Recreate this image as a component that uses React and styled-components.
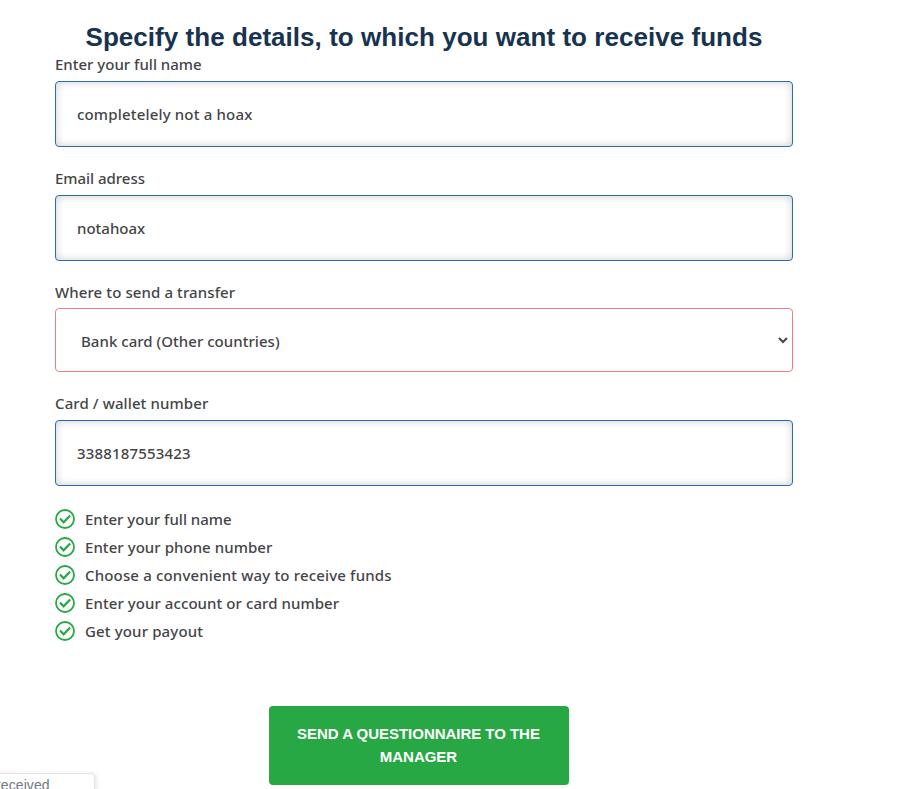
import React from 'react';
import styled, { createGlobalStyle } from 'styled-components';

const GlobalStyle = createGlobalStyle`
  *, *::before, *::after { box-sizing: border-box; }
  html, body { margin: 0; background: #fff; }
  body {
    height: 789px;
    overflow: hidden;
    font-family: "Noto Sans", sans-serif;
    font-size: 15px;
    font-weight: 500;
    line-height: 24px;
    color: #444547;
  }
`;

const Page = styled.main`
  position: relative;
  width: 902px;
  height: 789px;
  overflow: hidden;
  padding: 22px 0 0 55px;
`;

const Form = styled.form`
  width: 738px;
  display: flex;
  flex-direction: column;
`;

const Title = styled.h1`
  margin: 0;
  font: 700 26px/30px "Liberation Sans", sans-serif;
  letter-spacing: 0.04px;
  color: #17334f;
  text-align: center;
  white-space: nowrap;
`;

const Field = styled.label`
  display: flex;
  flex-direction: column;
  margin-bottom: 19px;
`;

const Caption = styled.span`
  height: ${(p) => p.$height}px;
  letter-spacing: ${(p) => p.$spacing}px;
  white-space: nowrap;
`;

const Input = styled.input`
  height: 66px;
  padding: 0 21px;
  border: 1px solid #2b6cb0;
  border-radius: 4px;
  outline: none;
  background: #fff;
  box-shadow: inset 0 0 8px rgba(0, 0, 0, 0.2);
  font: 500 15px/24px "Noto Sans", sans-serif;
  letter-spacing: ${(p) => p.$spacing}px;
  color: #444547;
`;

const SelectBox = styled.span`
  display: flex;
  align-items: center;
  height: 64px;
  padding-right: 4px;
  border: 1px solid #ec7f88;
  border-radius: 4px;
`;

const Select = styled.select`
  flex: 1;
  height: 62px;
  padding: 2px 0 0 25px;
  border: 0;
  outline: none;
  appearance: none;
  background: transparent;
  font: 500 15px/24px "Noto Sans", sans-serif;
  letter-spacing: ${(p) => p.$spacing}px;
  color: #444547;
`;

const Chevron = styled.svg`
  width: 10px;
  height: 8px;
  flex: none;
`;

const Steps = styled.ul`
  list-style: none;
  margin: 0;
  padding: 0;
`;

const Step = styled.li`
  display: flex;
  align-items: center;
  gap: 10px;
  height: 28px;
  letter-spacing: ${(p) => p.$spacing}px;
  white-space: nowrap;
`;

const CheckIcon = styled.svg`
  width: 20px;
  height: 20px;
  flex: none;
`;

const Submit = styled.button`
  align-self: center;
  width: 300px;
  height: 79px;
  margin: 61px 10px 0 0;
  padding: 0 21px 2px 20px;
  border: 0;
  border-radius: 4px;
  background: #28a745;
  color: #fff;
  font: 700 15px/23px "Liberation Sans", sans-serif;
  letter-spacing: -0.03px;
`;

const Toast = styled.aside`
  position: absolute;
  left: -10px;
  top: 773px;
  width: 105px;
  height: 40px;
  padding: 1px 0 0 5px;
  border: 1px solid #e4e5e6;
  border-radius: 4px;
  background: #fff;
  box-shadow: 1px 1px 5px rgba(0, 0, 0, 0.12);
  font: 14px/21px "Liberation Sans", sans-serif;
  letter-spacing: 0.1px;
  color: #717982;
`;

const steps = [
  ['Enter your full name', 0],
  ['Enter your phone number', 0.05],
  ['Choose a convenient way to receive funds', 0.16],
  ['Enter your account or card number', 0.07],
  ['Get your payout', 0.14],
];

export default function App() {
  return (
    <>
      <GlobalStyle />
      <Page>
        <Form>
          <Title>Specify the details, to which you want to receive funds</Title>
          <Field>
            <Caption $height={29} $spacing={0}>Enter your full name</Caption>
            <Input $spacing={0.17} defaultValue="completelely not a hoax" />
          </Field>
          <Field>
            <Caption $height={29} $spacing={-0.03}>Email adress</Caption>
            <Input $spacing={0} defaultValue="notahoax" />
          </Field>
          <Field>
            <Caption $height={28} $spacing={0.1}>Where to send a transfer</Caption>
            <SelectBox>
              <Select $spacing={0.03}>
                <option>Bank card (Other countries)</option>
              </Select>
              <Chevron viewBox="0 0 10 8" fill="none">
                <path d="M1 2l4 4 4-4" stroke="#444547" strokeWidth="2" />
              </Chevron>
            </SelectBox>
          </Field>
          <Field>
            <Caption $height={29} $spacing={0.1}>Card / wallet number</Caption>
            <Input $spacing={0.17} defaultValue="3388187553423" />
          </Field>
          <Steps>
            {steps.map(([text, spacing]) => (
              <Step key={text} $spacing={spacing}>
                <CheckIcon viewBox="0 0 20 20" fill="none" stroke="#28a745">
                  <circle cx="10" cy="10" r="9" strokeWidth="1.8" />
                  <path d="M5 9.6l3.6 3.7 6.5-6.8" strokeWidth="2.2" />
                </CheckIcon>
                <span>{text}</span>
              </Step>
            ))}
          </Steps>
          <Submit type="button">SEND A QUESTIONNAIRE TO THE MANAGER</Submit>
        </Form>
        <Toast>received</Toast>
      </Page>
    </>
  );
}
